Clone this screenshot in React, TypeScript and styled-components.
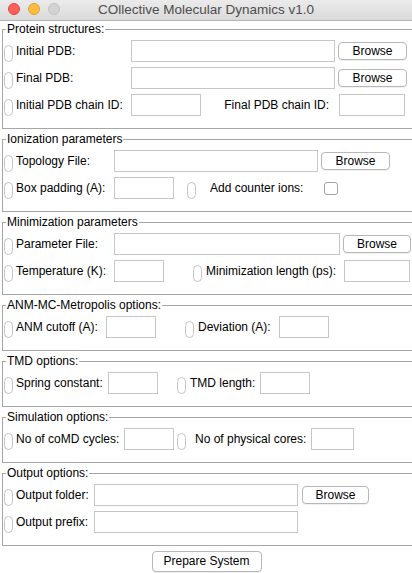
import React from "react";
import styled, { createGlobalStyle } from "styled-components";

const GlobalStyle = createGlobalStyle`
  html, body {
    margin: 0;
    padding: 0;
    background: #ffffff;
  }
  body {
    font-family: "Liberation Sans", Arial, sans-serif;
  }
`;

const Window = styled.div`
  width: 412px;
  height: 573px;
  overflow: hidden;
  background: #ffffff;
  display: flex;
  flex-direction: column;
  font-size: 12px;
  color: #000;
`;

const TitleBar = styled.div`
  flex: none;
  height: 20px;
  border-bottom: 1px solid #b4b4b4;
  background: linear-gradient(#ebebeb, #dadada);
  display: grid;
  grid-template-columns: 64px 1fr 64px;
  align-items: start;
`;

const Lights = styled.div`
  display: flex;
  gap: 8px;
  padding: 3px 0 0 8px;
`;

const Light = styled.span<{ $fill: string; $edge: string }>`
  width: 12px;
  height: 12px;
  border-radius: 50%;
  box-sizing: border-box;
  background: ${(p) => p.$fill};
  border: 1px solid ${(p) => p.$edge};
`;

const Title = styled.div`
  text-align: center;
  white-space: nowrap;
  font-size: 13.5px;
  line-height: 19px;
  color: #4d4d4d;
`;

const Body = styled.div`
  display: flex;
  flex-direction: column;
  padding-top: 1px;
`;

const Group = styled.fieldset`
  margin: 0 -12px 3px 2px;
  padding: 4px 0 12px 0;
  border: 1px solid #a6a6a6;
  min-width: 0;
`;

const Legend = styled.legend`
  margin-left: 3px;
  padding: 0 1px;
  font-size: 12px;
  line-height: 14px;
`;

const Rows = styled.div`
  display: flex;
  flex-direction: column;
  gap: 5px;
`;

const Row = styled.div`
  display: flex;
  align-items: center;
  height: 22px;
`;

const Knob = styled.span<{ $ml: number }>`
  flex: none;
  box-sizing: border-box;
  width: 9px;
  height: 17px;
  margin-left: ${(p) => p.$ml}px;
  margin-top: 4px;
  border: 1px solid #c4c4c4;
  border-radius: 4.5px;
  background: #fff;
`;

const Caption = styled.span<{ $w?: number; $ml?: number; $right?: boolean; $pr?: number }>`
  flex: none;
  box-sizing: border-box;
  white-space: nowrap;
  margin-left: ${(p) => p.$ml ?? 3}px;
  ${(p) => (p.$w ? `width: ${p.$w}px;` : "")}
  text-align: ${(p) => (p.$right ? "right" : "left")};
  padding-right: ${(p) => p.$pr ?? 0}px;
`;

const Field = styled.input.attrs({ type: "text", readOnly: true })<{ $w: number }>`
  flex: none;
  box-sizing: border-box;
  width: ${(p) => p.$w}px;
  height: 22px;
  margin: 0;
  padding: 0 3px;
  border: 1px solid #c6c6c6;
  border-radius: 0;
  background: #fff;
  outline: none;
  font: 12px "Liberation Sans", Arial, sans-serif;
`;

const Btn = styled.button<{ $w: number; $ml?: number }>`
  flex: none;
  box-sizing: border-box;
  width: ${(p) => p.$w}px;
  height: 18px;
  margin: 0 0 0 ${(p) => p.$ml ?? 0}px;
  padding: 0;
  border: 1px solid #b7b7b7;
  border-radius: 4px;
  background: #fff;
  color: #000;
  font: 12px "Liberation Sans", Arial, sans-serif;
  line-height: 16px;
  box-shadow: 0 1px 0 rgba(0, 0, 0, 0.06);
`;

const Tick = styled.span`
  flex: none;
  box-sizing: border-box;
  width: 14px;
  height: 13px;
  border: 1px solid #a3a3a3;
  border-radius: 3px;
  background: #fff;
`;

const Footer = styled.div`
  display: flex;
  justify-content: center;
  padding: 2px 0 0 1px;
`;

const PrepareBtn = styled(Btn)`
  height: 21px;
  line-height: 19px;
`;

const App = () => {
  return (
    <>
      <GlobalStyle />
      <Window>
        <TitleBar>
          <Lights>
            <Light $fill="#fc605c" $edge="#e0483f" />
            <Light $fill="#fdbc40" $edge="#dea131" />
            <Light $fill="#d3d3d3" $edge="#c2c2c2" />
          </Lights>
          <Title>COllective Molecular Dynamics v1.0</Title>
          <span />
        </TitleBar>

        <Body>
          <Group>
            <Legend>Protein structures:</Legend>
            <Rows>
              <Row>
                <Knob $ml={1} />
                <Caption $w={115}>Initial PDB:</Caption>
                <Field $w={204} />
                <Btn $w={69} $ml={3}>Browse</Btn>
              </Row>
              <Row>
                <Knob $ml={1} />
                <Caption $w={115}>Final PDB:</Caption>
                <Field $w={204} />
                <Btn $w={69} $ml={3}>Browse</Btn>
              </Row>
              <Row>
                <Knob $ml={1} />
                <Caption $w={115}>Initial PDB chain ID:</Caption>
                <Field $w={70} />
                <Caption $ml={0} $w={138} $right $pr={10}>
                  Final PDB chain ID:
                </Caption>
                <Field $w={66} />
              </Row>
            </Rows>
          </Group>

          <Group>
            <Legend>Ionization parameters</Legend>
            <Rows>
              <Row>
                <Knob $ml={1} />
                <Caption $w={98}>Topology File:</Caption>
                <Field $w={204} />
                <Btn $w={69} $ml={3}>Browse</Btn>
              </Row>
              <Row>
                <Knob $ml={1} />
                <Caption $w={98}>Box padding (A):</Caption>
                <Field $w={60} />
                <Knob $ml={13} />
                <Caption $ml={14} $w={114}>Add counter ions:</Caption>
                <Tick />
              </Row>
            </Rows>
          </Group>

          <Group>
            <Legend>Minimization parameters</Legend>
            <Rows>
              <Row>
                <Knob $ml={1} />
                <Caption $w={98}>Parameter File:</Caption>
                <Field $w={226} />
                <Btn $w={68} $ml={3}>Browse</Btn>
              </Row>
              <Row>
                <Knob $ml={1} />
                <Caption $w={98}>Temperature (K):</Caption>
                <Field $w={50} />
                <Knob $ml={29} />
                <Caption $ml={4} $w={138}>Minimization length (ps):</Caption>
                <Field $w={66} />
              </Row>
            </Rows>
          </Group>

          <Group>
            <Legend>ANM-MC-Metropolis options:</Legend>
            <Rows>
              <Row>
                <Knob $ml={1} />
                <Caption $w={90}>ANM cutoff (A):</Caption>
                <Field $w={50} />
                <Knob $ml={29} />
                <Caption $ml={4} $w={81}>Deviation (A):</Caption>
                <Field $w={50} />
              </Row>
            </Rows>
          </Group>

          <Group>
            <Legend>TMD options:</Legend>
            <Rows>
              <Row>
                <Knob $ml={1} />
                <Caption $w={92}>Spring constant:</Caption>
                <Field $w={50} />
                <Knob $ml={19} />
                <Caption $ml={4} $w={70}>TMD length:</Caption>
                <Field $w={50} />
              </Row>
            </Rows>
          </Group>

          <Group>
            <Legend>Simulation options:</Legend>
            <Rows>
              <Row>
                <Knob $ml={1} />
                <Caption $w={108}>No of coMD cycles:</Caption>
                <Field $w={50} />
                <Knob $ml={3} />
                <Caption $ml={9} $w={116}>No of physical cores:</Caption>
                <Field $w={43} />
              </Row>
            </Rows>
          </Group>

          <Group>
            <Legend>Output options:</Legend>
            <Rows>
              <Row>
                <Knob $ml={1} />
                <Caption $w={78}>Output folder:</Caption>
                <Field $w={204} />
                <Btn $w={67} $ml={4}>Browse</Btn>
              </Row>
              <Row>
                <Knob $ml={1} />
                <Caption $w={78}>Output prefix:</Caption>
                <Field $w={204} />
              </Row>
            </Rows>
          </Group>

          <Footer>
            <PrepareBtn $w={110}>Prepare System</PrepareBtn>
          </Footer>
        </Body>
      </Window>
    </>
  );
};

export default App;
